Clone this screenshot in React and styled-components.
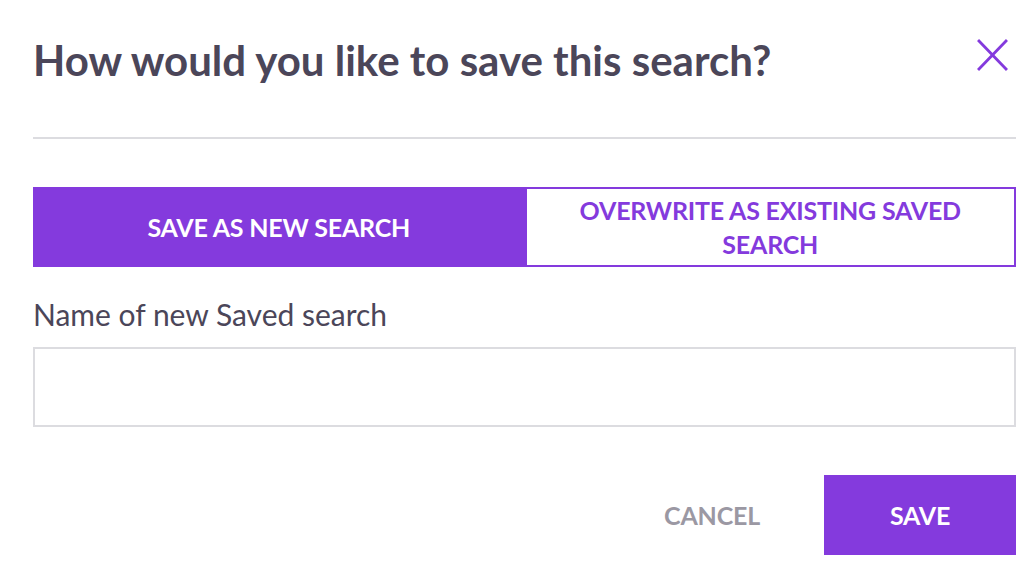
import styled, { createGlobalStyle } from "styled-components";
import { useState } from "react";

const GlobalStyle = createGlobalStyle`
  * {
    box-sizing: border-box;
  }
  body {
    margin: 0;
    background: #ffffff;
    font-family: Lato, "Open Sans", sans-serif;
  }
`;

const App = () => {
  // 어떤 탭이 선택됐는지
  const [mode, setMode] = useState("new");
  const [name, setName] = useState("");

  return (
    <>
      <GlobalStyle />
      <Dialog>
        <Header>
          <Title>How would you like to save this search?</Title>
          <CloseButton aria-label="Close">
            <svg width="31" height="32" viewBox="0 0 31 32">
              <path
                d="M2 2 L29 30 M29 2 L2 30"
                stroke="#843add"
                strokeWidth="2.8"
                strokeLinecap="square"
                fill="none"
              />
            </svg>
          </CloseButton>
        </Header>

        <Tabs>
          <Tab $active={mode === "new"} onClick={() => setMode("new")}>
            SAVE AS NEW SEARCH
          </Tab>
          <Tab $active={mode === "overwrite"} onClick={() => setMode("overwrite")}>
            OVERWRITE AS EXISTING SAVED SEARCH
          </Tab>
        </Tabs>

        <Label htmlFor="search-name">Name of new Saved search</Label>
        <Input
          id="search-name"
          value={name}
          onChange={(e) => setName(e.target.value)}
        />

        <Footer>
          <Button>CANCEL</Button>
          <Button $primary>SAVE</Button>
        </Footer>
      </Dialog>
    </>
  );
};

export default App;

const purple = "#843add";

const Dialog = styled.div`
  display: flex;
  flex-direction: column;
  padding: 0 20px 0 33px;
  width: 1036px;
`;

const Header = styled.div`
  display: flex;
  justify-content: space-between;
  align-items: flex-start;
  height: 139px;
  padding-top: 35px;
  border-bottom: 2px solid #dcdce0;
`;

const Title = styled.h1`
  margin: 0;
  font-size: 42px;
  line-height: 50px;
  font-weight: 700;
  color: #4b4659;
`;

const CloseButton = styled.button`
  border: none;
  background: none;
  padding: 0;
  margin: 4px 8px 0 0;
  cursor: pointer;
  display: flex;
`;

const Tabs = styled.div`
  display: grid;
  grid-template-columns: 1fr 1fr;
  margin-top: 48px;
  height: 80px;
`;

const Tab = styled.button`
  display: flex;
  align-items: center;
  justify-content: center;
  padding: 0 36px;
  font-family: inherit;
  font-size: 25px;
  line-height: 34px;
  font-weight: 700;
  letter-spacing: -0.2px;
  text-align: center;
  border: 2px solid ${purple};
  background: ${(p) => (p.$active ? purple : "#ffffff")};
  color: ${(p) => (p.$active ? "#ffffff" : purple)};
  cursor: pointer;
`;

const Label = styled.label`
  margin-top: 29px;
  font-size: 30px;
  line-height: 36px;
  color: #4b4659;
`;

const Input = styled.input`
  margin-top: 15px;
  height: 80px;
  border: 2px solid #dcdce0;
  padding: 0 20px;
  font-family: inherit;
  font-size: 28px;
  color: #4b4659;
  outline: none;
`;

const Footer = styled.div`
  display: flex;
  justify-content: flex-end;
  gap: 16px;
  margin-top: 48px;
`;

const Button = styled.button`
  width: 192px;
  height: 80px;
  border: none;
  font-family: inherit;
  font-size: 25px;
  font-weight: 700;
  letter-spacing: -0.2px;
  background: ${(p) => (p.$primary ? purple : "transparent")};
  color: ${(p) => (p.$primary ? "#ffffff" : "#9b98a3")};
  cursor: pointer;
`;
